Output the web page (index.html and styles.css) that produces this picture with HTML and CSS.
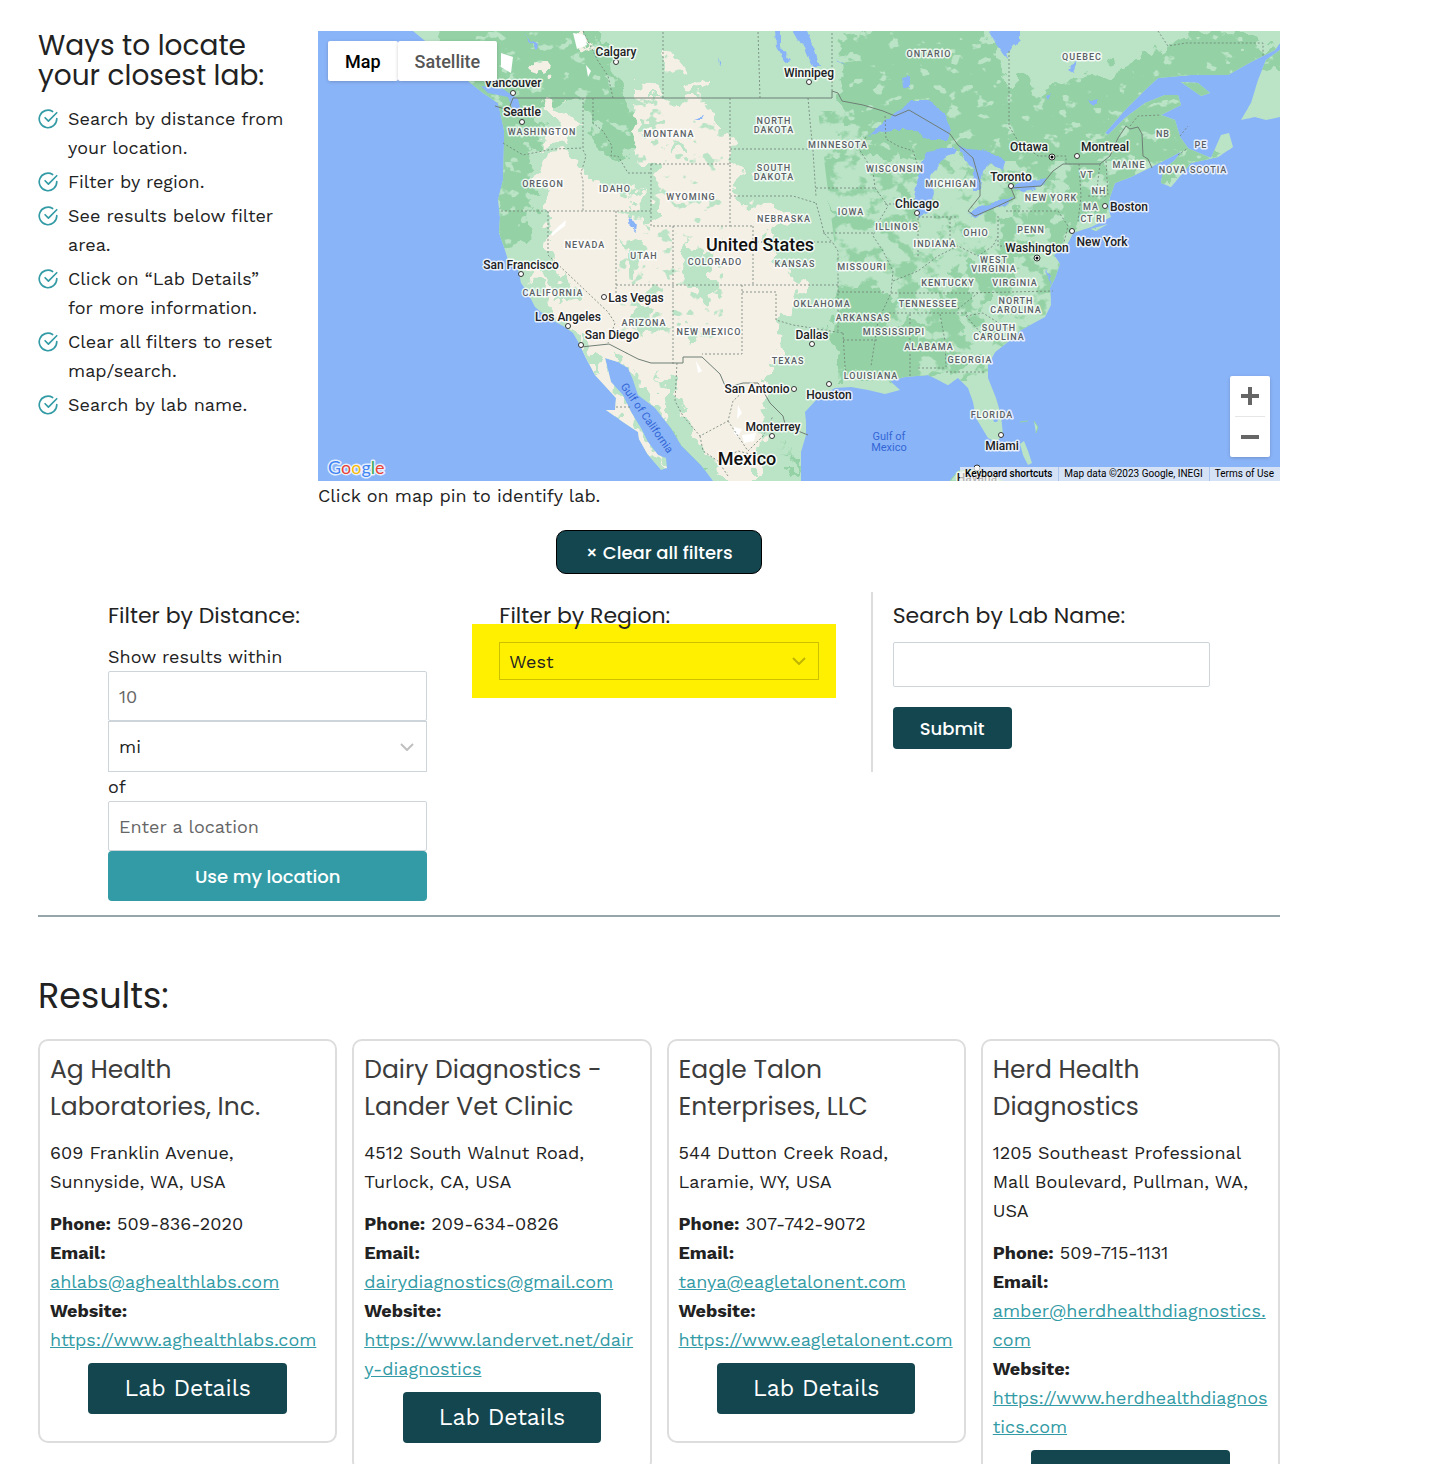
FILE: index.html
```html
<!DOCTYPE html>
<html lang="en">
<head>
    <meta charset="UTF-8">
    <meta name="viewport" content="width=device-width, initial-scale=1.0">
    <title>Find a Lab</title>
    <link rel="stylesheet" href="styles.css">
</head>
<body>
    <svg class="defs" width="0" height="0" aria-hidden="true">
        <symbol id="check" viewBox="0 0 24 24">
            <path d="M22.5 11.5V12a10.5 10.5 0 1 1-5-9"/>
            <path d="M8.5 10.5l4 4L22.5 4.5"/>
        </symbol>
    </svg>

    <main class="page">
        <!-- Intro and map section -->
        <section class="top">
            <div class="intro">
                <h2>Ways to locate your closest lab:</h2>
                <ul class="steps">
                    <li><svg><use href="#check"/></svg><span>Search by distance from your location.</span></li>
                    <li><svg><use href="#check"/></svg><span>Filter by region.</span></li>
                    <li><svg><use href="#check"/></svg><span>See results below filter area.</span></li>
                    <li><svg><use href="#check"/></svg><span>Click on “Lab Details” for more information.</span></li>
                    <li><svg><use href="#check"/></svg><span>Clear all filters to reset map/search.</span></li>
                    <li><svg><use href="#check"/></svg><span>Search by lab name.</span></li>
                </ul>
            </div>

            <div class="map-col">
                <div class="map">
                    <svg class="map-svg" viewBox="0 0 962 450" preserveAspectRatio="xMidYMid slice">
                        <defs>
                            <filter id="rough" x="-5%" y="-5%" width="110%" height="110%">
                                <feTurbulence type="fractalNoise" baseFrequency="0.06" numOctaves="3" seed="4"/>
                                <feDisplacementMap in="SourceGraphic" scale="34" xChannelSelector="R" yChannelSelector="G"/>
                            </filter>
                            <filter id="coast" x="-5%" y="-5%" width="110%" height="110%">
                                <feTurbulence type="fractalNoise" baseFrequency="0.12" numOctaves="2" seed="9"/>
                                <feDisplacementMap in="SourceGraphic" scale="6" xChannelSelector="R" yChannelSelector="G"/>
                            </filter>
                            <filter id="speckle" x="0" y="0" width="100%" height="100%">
                                <feTurbulence type="fractalNoise" baseFrequency="0.06 0.07" numOctaves="3" seed="12"/>
                                <feColorMatrix values="0 0 0 0 0  0 0 0 0 0  0 0 0 0 0  14 0 0 0 -7.6"/>
                                <feComposite in="SourceGraphic" operator="in"/>
                            </filter>
                            <filter id="sparse" x="0" y="0" width="100%" height="100%">
                                <feTurbulence type="fractalNoise" baseFrequency="0.07 0.09" numOctaves="3" seed="21"/>
                                <feColorMatrix values="0 0 0 0 0  0 0 0 0 0  0 0 0 0 0  14 0 0 0 -8.8"/>
                                <feComposite in="SourceGraphic" operator="in"/>
                            </filter>
                            <filter id="dense" x="0" y="0" width="100%" height="100%">
                                <feTurbulence type="fractalNoise" baseFrequency="0.05 0.06" numOctaves="4" seed="7"/>
                                <feColorMatrix values="0 0 0 0 0  0 0 0 0 0  0 0 0 0 0  10 0 0 0 -5"/>
                                <feComposite in="SourceGraphic" operator="in"/>
                            </filter>
                            <clipPath id="land">
                                <path d="M95 0L112 14L135 38L150 50L165 62L180 72L186 99L186 112L185 149L180 169L182 186L181 202L186 216L190 229L200 237L203 252L210 262L217 276L230 287L245 295L255 302L262 314L268 327L277 344L288 356L298 367L297 379L288 379L305 391L320 401L321 408L330 424L343 439L349 437L348 427L340 424L330 411L323 397L313 381L305 364L293 351L287 327L300 331L310 337L315 349L320 364L337 377L353 397L363 414L383 434L395 450L483 450L483 421L488 404L488 391L487 381L500 367L517 357L533 356L550 359L567 363L582 359L572 350L587 346L610 344L620 349L630 354L640 347L650 357L655 371L658 387L670 407L678 411L685 404L683 384L678 367L670 347L670 334L677 321L690 311L703 299L727 286L733 274L732 257L737 247L742 233L736 224L748 216L755 202L773 196L793 186L790 176L792 166L797 152L813 146L833 136L853 126L870 117L862 106L857 89L843 84L863 74L860 64L847 64L827 72L807 87L790 104L787 102L807 79L827 59L840 47L873 44L910 44L933 31L957 19L962 12V0Z"/>
                                <path d="M867 116L893 127L903 104L911 102L915 116L900 126L873 132L853 156L843 152L845 139L857 129Z"/>
                                <path d="M948 29L962 19V86L948 89L937 86L923 89L933 72L940 49Z"/>
                                <path d="M863 51L880 52L892 62L883 65Z"/>
                                <path d="M704 188L711 194L708 200L702 194Z"/>
                                <path d="M773 198l17-5-12 7zM702 413l4-3 4 10 4 12-4 2-5-10z"/>
                            </clipPath>
                        </defs>
                        <rect width="962" height="450" class="sea"/>
                        <g clip-path="url(#land)">
                            <rect width="962" height="450" class="light"/>
                            <!-- forests -->
                            <path class="dark" filter="url(#dense)" d="M500 80H700L760 200L730 290L670 350H520V240L510 160Z"/>
                            <g class="dark" filter="url(#rough)">
                                <path d="M120 -20H265L300 40L310 75L330 110L300 130L275 120L268 75L215 75L225 110L210 130L215 170L210 195L205 215L182 205L170 120L130 60Z"/>
                                <path d="M525 10L570 -20H660L690 50L740 55L800 35L900 -5L970 30L900 60L870 120L840 160L770 200L745 150L700 145L660 130L645 120L600 130L560 125L530 85L520 60Z"/>
                                <path d="M690 185L750 160L790 150L760 200L700 230L670 270L650 280L640 300L600 300L640 240L680 215Z"/>
                                <path d="M520 262L545 250L575 265L560 300L600 290L640 300L665 330L600 350L560 345L525 345L515 300Z"/>
                                <path d="M835 100L900 120L850 160Z"/>
                                <path d="M350 370L370 400L400 440L385 450L345 390Z"/>
                                <path d="M460 410L480 430L478 450L455 425Z"/>
                                <path d="M510 170L530 180L545 195L520 190Z"/>
                            </g>
                            <rect x="500" y="0" width="462" height="130" class="light" filter="url(#sparse)"/>
                            <rect x="600" y="130" width="362" height="230" class="light" filter="url(#speckle)"/>
                            <rect x="150" y="0" width="150" height="270" class="light" filter="url(#sparse)"/>
                            <!-- dry land -->
                            <g class="dry" filter="url(#rough)">
                                <path d="M318 72L388 66L398 95L414 112L412 130L432 142L415 155L422 170L460 175L478 190L450 198L448 215L462 235L482 250L476 275L462 290L460 320L445 345L450 372L445 395L440 420L440 450H412L395 430L368 390L350 360L340 340L352 395L300 325L290 400L262 320L252 298L225 262L212 240L228 235L225 208L240 190L216 180L226 160L214 148L228 125L255 122L262 135L280 150L300 160L310 150L330 165L325 130L312 100Z"/>
                                <path d="M228 70L242 72L256 95L250 112L225 115L234 90Z"/>
                                <path d="M345 24L365 25L362 42L348 45Z"/>
                                <path d="M375 50L392 52L390 60L372 58Z"/>
                                <path d="M316 50L340 58L345 68L316 68Z"/>
                                <path d="M262 2L272 6L275 20L262 15Z"/>
                                <path d="M215 28L232 36L230 50L218 42Z"/>
                                <path d="M290 350L310 375L345 440L300 400Z"/>
                            </g>
                            <!-- mountain vegetation inside the dry area -->
                            <g class="light" filter="url(#rough)">
                                <path d="M205 218L225 222L262 262L258 275L240 265L215 238Z"/>
                                <path d="M278 125L300 130L318 160L305 165L285 155Z"/>
                                <path d="M320 130L336 130L340 190L328 200L318 175Z"/>
                                <path d="M308 205L325 212L322 245L312 250Z"/>
                                <path d="M360 210L385 218L400 255L395 280L378 262L365 240Z"/>
                                <path d="M318 275L345 290L355 300L335 302L310 288Z"/>
                                <path d="M375 290L382 308L376 314L370 300Z"/>
                                <path d="M340 345L356 350L362 385L385 420L410 445L380 445L352 395Z"/>
                                <path d="M262 305L275 315L284 345L270 330Z"/>
                                <path d="M440 370L456 376L456 395L478 440L460 440L450 410Z"/>
                                <path d="M322 88L345 90L342 98L325 96Z"/>
                                <path d="M352 112L375 118L370 124L350 120Z"/>
                            </g>
                            <rect x="300" y="68" width="105" height="240" class="light" filter="url(#sparse)"/>
                            <!-- salt flats and snow -->
                            <path class="snow" d="M233 203l8-8 7-6-1 6-7 5-6 5zM420 374l4 8-5 6zM416 396l8 2-4 8-4-4zM424 404l14-2-2 8-10 2zM378 330l6 10-4 2zM183 22l12 4-2 16-10-6zM255 2l12 2 2 10-10 4zM268 34l5 6-3 6z"/>
                            <!-- lakes and bays -->
                            <g class="sea" filter="url(#coast)">
                                <path d="M668 -5L680 16L688 27L695 16L702 9V-5Z"/>
                                <path d="M550 106L567 89L583 79L593 69L610 69L627 82L633 99L630 109L610 109L597 99L573 99L560 102Z"/>
                                <path d="M607 122L630 116L640 119L623 129L613 146L615 162L610 182L600 186L596 166L600 146Z"/>
                                <path d="M640 114L650 118L670 120L687 129L685 139L672 132L665 139L663 159L655 159L656 139L646 126Z"/>
                                <path d="M650 182L667 174L697 166L690 173L667 181L657 187Z"/>
                                <path d="M693 156L703 151L730 147L723 156L707 161Z"/>
                                <path d="M473 -5L487 -5L497 19L502 36L494 36L487 19Z"/>
                                <path d="M457 -3L462 -3L462 16L473 29L467 31L458 16Z"/>
                                <path d="M310 187L314 188L319 195L318 201L312 196Z"/>
                                <path d="M584 46l8-2v12l-7 2z"/>
                                <path d="M750 38l10-10-5 13zM770 69l10-2-4 8zM728 65l5-2-3 6z"/>
                                <path d="M376 88l10-3-2 3zM400 26l3 8-2-1zM518 30l12 4-8-2z"/>
                                <path d="M726 236l3 8 3 10 1-8z"/>
                                <path d="M206 3l14 12-2 3z"/>
                                <path d="M675 388l4-3 2 4-4 2z"/>
                            </g>
                            <path class="sea" d="M163 55L185 58L200 68L203 80L196 82L190 66L170 62Z"/>
                        </g>
                        <path class="isle" d="M702 391l8-1M716 390l4 6-2 6M632 450l8-10 20-2 25 12z"/>

                        <!-- borders -->
                        <g class="state-line">
                            <path d="M185 112L195 118L205 124L235 118L265 117M265 67V119L268 125L263 142L265 150V180M183 180H333M230 180V224L290 281L297 292L290 312M298 180V264M275 67V92L285 100L294 115L293 125L300 125L310 142H332"/>
                            <path d="M333 133H412V195H333ZM412 67V133M412 118H490M490 67L492 90L495 120L498 165M412 165H475L498 172M498 157H557M498 172L503 190L506 202L515 212M355 195V333M435 195V254M298 254H520M424 254V323H384M424 261H458V289L475 294L500 298L525 302"/>
                            <path d="M412 195H435M435 211H515M515 212L520 220V300M525 309H559M520 261H568M525 302L527 335L530 350M505 202H555M557 157L570 175L560 192L555 205L565 220L575 240L573 262L560 290L553 335M548 106L541 118L555 140L557 157M567 173H598M600 187V225M632 187V215M600 186H640M567 85L568 108L580 115L595 120L600 135"/>
                            <path d="M571 282H650M573 262H650M592 283V345M622 283L627 310L628 336M600 337H628M628 341H668M575 250L600 240L620 225L640 215L660 225L675 215L680 205M650 262L735 260M648 285L665 282L690 298M640 278L660 262M648 285L670 310M680 185V215H735M688 180H740L750 195L745 215M761 133L763 165L760 190M782 133L778 165M770 165H790M765 180H780M788 130L790 165"/>
                            <path d="M442 67L440 0M345 67V0M514 60V0M691 20V95L700 110L720 125H748V133M265 0L280 30L290 45L295 67M812 95L820 85L843 84M840 0L850 15L868 12H945V25M862 105L870 95M860 124L870 117"/>
                            <path d="M359 332L357 370L365 385L382 405L410 390L415 370L428 358M382 405L385 420L400 430L420 420L440 425M410 390L430 420L445 405L455 385M400 430L410 445M298 376H313"/>
                        </g>
                        <path class="country-line" d="M177 75L190 79M195 67H514V60L520 62L524 70L545 74L565 80L577 85L591 79L632 103L640 114L645 118L655 127L662 152L662 165L650 180L657 185L680 175L697 167L693 157L723 155L735 140L745 133H782L792 125L800 107L808 95L812 98L820 96L824 103L825 125L830 128L834 137M263 316L291 313L320 328L333 332H365V326H384L402 343L408 357L425 352H440L448 365L452 372L465 385L467 393L480 400L490 404M195 67L192 75L196 82"/>

                        <g class="dots">
                            <circle cx="298" cy="31" r="2.5"/><circle cx="195" cy="62" r="2.5"/><circle cx="204" cy="91" r="2.5"/>
                            <circle cx="491" cy="51" r="2.5"/><circle cx="203" cy="243" r="2.5"/><circle cx="286" cy="266" r="2.5"/>
                            <circle cx="250" cy="295" r="2.5"/><circle cx="263" cy="314" r="2.5"/><circle cx="494" cy="313" r="2.5"/>
                            <circle cx="476" cy="358" r="2.5"/><circle cx="511" cy="353" r="2.5"/><circle cx="454" cy="405" r="2.5"/>
                            <circle cx="599" cy="182" r="2.5"/><circle cx="693" cy="155" r="2.5"/><circle cx="759" cy="125" r="2.5"/>
                            <circle cx="787" cy="175" r="2.5"/><circle cx="754" cy="200" r="2.5"/><circle cx="683" cy="404" r="2.5"/>
                            <circle cx="734" cy="126" r="3"/><circle cx="719" cy="227" r="3"/><circle cx="659" cy="437" r="3"/>
                        </g>
                        <g class="capital"><circle cx="734" cy="126" r="1.5"/><circle cx="719" cy="227" r="1.5"/></g>

                        <!-- labels -->
                        <g class="state">
                            <text x="224" y="104">WASHINGTON</text>
                            <text x="225" y="156">OREGON</text>
                            <text x="297" y="161">IDAHO</text>
                            <text x="351" y="106">MONTANA</text>
                            <text x="373" y="169">WYOMING</text>
                            <text x="267" y="217">NEVADA</text>
                            <text x="326" y="228">UTAH</text>
                            <text x="397" y="234">COLORADO</text>
                            <text x="235" y="265">CALIFORNIA</text>
                            <text x="326" y="295">ARIZONA</text>
                            <text x="391" y="304">NEW MEXICO</text>
                            <text x="456" y="93">NORTH</text><text x="456" y="102">DAKOTA</text>
                            <text x="456" y="140">SOUTH</text><text x="456" y="149">DAKOTA</text>
                            <text x="520" y="117">MINNESOTA</text>
                            <text x="466" y="191">NEBRASKA</text>
                            <text x="477" y="236">KANSAS</text>
                            <text x="504" y="276">OKLAHOMA</text>
                            <text x="470" y="333">TEXAS</text>
                            <text x="533" y="184">IOWA</text>
                            <text x="544" y="239">MISSOURI</text>
                            <text x="545" y="290">ARKANSAS</text>
                            <text x="553" y="348">LOUISIANA</text>
                            <text x="577" y="141">WISCONSIN</text>
                            <text x="579" y="199">ILLINOIS</text>
                            <text x="633" y="156">MICHIGAN</text>
                            <text x="617" y="216">INDIANA</text>
                            <text x="658" y="205">OHIO</text>
                            <text x="630" y="255">KENTUCKY</text>
                            <text x="610" y="276">TENNESSEE</text>
                            <text x="576" y="304">MISSISSIPPI</text>
                            <text x="611" y="319">ALABAMA</text>
                            <text x="652" y="332">GEORGIA</text>
                            <text x="674" y="387">FLORIDA</text>
                            <text x="676" y="232">WEST</text><text x="676" y="241">VIRGINIA</text>
                            <text x="697" y="255">VIRGINIA</text>
                            <text x="698" y="273">NORTH</text><text x="698" y="282">CAROLINA</text>
                            <text x="681" y="300">SOUTH</text><text x="681" y="309">CAROLINA</text>
                            <text x="713" y="202">PENN</text>
                            <text x="733" y="170">NEW YORK</text>
                            <text x="769" y="147">VT</text>
                            <text x="781" y="163">NH</text>
                            <text x="773" y="179">MA</text>
                            <text x="769" y="191">CT</text><text x="783" y="191">RI</text>
                            <text x="811" y="137">MAINE</text>
                            <text x="845" y="106">NB</text>
                            <text x="883" y="117">PE</text>
                            <text x="875" y="142">NOVA SCOTIA</text>
                            <text x="611" y="26">ONTARIO</text>
                            <text x="764" y="29">QUEBEC</text>
                        </g>
                        <g class="city">
                            <text x="298" y="25">Calgary</text>
                            <text x="195" y="56">Vancouver</text>
                            <text x="204" y="85">Seattle</text>
                            <text x="491" y="46">Winnipeg</text>
                            <text x="203" y="238">San Francisco</text>
                            <text x="318" y="271">Las Vegas</text>
                            <text x="250" y="290">Los Angeles</text>
                            <text x="294" y="308">San Diego</text>
                            <text x="494" y="308">Dallas</text>
                            <text x="439" y="362">San Antonio</text>
                            <text x="511" y="368">Houston</text>
                            <text x="455" y="400">Monterrey</text>
                            <text x="599" y="177">Chicago</text>
                            <text x="711" y="120">Ottawa</text>
                            <text x="787" y="120">Montreal</text>
                            <text x="693" y="150">Toronto</text>
                            <text x="811" y="180">Boston</text>
                            <text x="784" y="215">New York</text>
                            <text x="719" y="221">Washington</text>
                            <text x="684" y="419">Miami</text>
                            <text x="659" y="451">Havana</text>
                        </g>
                        <g class="country">
                            <text x="442" y="220">United States</text>
                            <text x="429" y="434">Mexico</text>
                        </g>
                        <g class="water">
                            <text x="571" y="409">Gulf of</text><text x="571" y="420">Mexico</text>
                            <text transform="translate(326 389) rotate(55)">Gulf of California</text>
                        </g>
                        <text class="google" x="10" y="443"><tspan class="g-blue">G</tspan><tspan class="g-red">o</tspan><tspan class="g-yellow">o</tspan><tspan class="g-blue">g</tspan><tspan class="g-green">l</tspan><tspan class="g-red">e</tspan></text>
                    </svg>

                    <div class="map-type">
                        <button type="button" class="active">Map</button>
                        <button type="button">Satellite</button>
                    </div>
                    <div class="zoom">
                        <button type="button" aria-label="Zoom in"><svg viewBox="0 0 18 18"><path d="M0 7h7V0h4v7h7v4h-7v7H7v-7H0z"/></svg></button>
                        <button type="button" aria-label="Zoom out"><svg viewBox="0 0 18 18"><path d="M0 7h18v4H0z"/></svg></button>
                    </div>
                    <div class="credits">
                        <button type="button">Keyboard shortcuts</button>
                        <span>Map data ©2023 Google, INEGI</span>
                        <a href="#">Terms of Use</a>
                    </div>
                </div>
                <p>Click on map pin to identify lab.</p>
            </div>
        </section>

        <!-- Filter section -->
        <button type="button" class="btn clear">× Clear all filters</button>
        <section class="filters">
            <div class="filter">
                <h3>Filter by Distance:</h3>
                <label for="distance">Show results within</label>
                <input type="text" id="distance" placeholder="10">
                <select id="unit" aria-label="Unit">
                    <option>mi</option>
                    <option>km</option>
                </select>
                <label for="location">of</label>
                <input type="text" id="location" placeholder="Enter a location">
                <button type="button" class="btn locate">Use my location</button>
            </div>
            <div class="filter">
                <h3><label for="region">Filter by Region:</label></h3>
                <div class="highlight">
                    <select id="region">
                        <option>West</option>
                        <option>Midwest</option>
                        <option>South</option>
                        <option>Northeast</option>
                    </select>
                </div>
            </div>
            <form class="filter search">
                <h3><label for="labname">Search by Lab Name:</label></h3>
                <input type="text" id="labname">
                <button type="submit" class="btn submit">Submit</button>
            </form>
        </section>

        <!-- Results section -->
        <h1>Results:</h1>
        <section class="results">
            <article class="card">
                <h2>Ag Health Laboratories, Inc.</h2>
                <p>609 Franklin Avenue, Sunnyside, WA, USA</p>
                <p><b>Phone:</b> 509-836-2020<br>
                <b>Email:</b><br><a href="#">ahlabs@aghealthlabs.com</a><br>
                <b>Website:</b><br><a href="#">https://www.aghealthlabs.com</a></p>
                <button type="button" class="btn details">Lab Details</button>
            </article>
            <article class="card">
                <h2>Dairy Diagnostics - Lander Vet Clinic</h2>
                <p>4512 South Walnut Road, Turlock, CA, USA</p>
                <p><b>Phone:</b> 209-634-0826<br>
                <b>Email:</b><br><a href="#">dairydiagnostics@gmail.com</a><br>
                <b>Website:</b><br><a href="#">https://www.landervet.net/dair<wbr>y-diagnostics</a></p>
                <button type="button" class="btn details">Lab Details</button>
            </article>
            <article class="card">
                <h2>Eagle Talon Enterprises, LLC</h2>
                <p>544 Dutton Creek Road, Laramie, WY, USA</p>
                <p><b>Phone:</b> 307-742-9072<br>
                <b>Email:</b><br><a href="#">tanya@eagletalonent.com</a><br>
                <b>Website:</b><br><a href="#">https://www.eagletalonent.com</a></p>
                <button type="button" class="btn details">Lab Details</button>
            </article>
            <article class="card">
                <h2>Herd Health Diagnostics</h2>
                <p>1205 Southeast Professional Mall Boulevard, Pullman, WA, USA</p>
                <p><b>Phone:</b> 509-715-1131<br>
                <b>Email:</b><br><a href="#">amber@herdhealthdiagnostics.<wbr>com</a><br>
                <b>Website:</b><br><a href="#">https://www.herdhealthdiagnos<wbr>tics.com</a></p>
                <button type="button" class="btn details">Lab Details</button>
            </article>
        </section>
    </main>
</body>
</html>
```
FILE: styles.css
```css
* {
    box-sizing: border-box;
}

body {
    margin: 0;
    font-family: "Work Sans", Inter, sans-serif;
    font-size: 18px;
    line-height: 29px;
    color: #222;
    background-color: #fff;
}

h1, h2, h3, p, ul {
    margin: 0;
    padding: 0;
}

h1, h2, h3 {
    font-family: Poppins, Inter, sans-serif;
    font-weight: 400;
}

button, input, select {
    font: inherit;
    color: inherit;
}

button {
    cursor: pointer;
}

a {
    color: #329ba5;
}

.defs {
    position: absolute;
}

.page {
    padding: 31px 172px 0 38px;
}

/* Intro and map */
.top {
    display: flex;
    gap: 30px;
}

.intro {
    flex: 0 0 250px;
}

.intro h2 {
    font-size: 28px;
    line-height: 30px;
    margin-bottom: 13px;
}

.steps {
    list-style: none;
    display: flex;
    flex-direction: column;
    gap: 5px;
}

.steps li {
    display: flex;
    gap: 10px;
}

.steps svg {
    flex: none;
    width: 20px;
    height: 20px;
    margin-top: 5px;
    fill: none;
    stroke: #329ba5;
    stroke-width: 2;
    stroke-linecap: round;
    stroke-linejoin: round;
}

.map-col {
    flex: 1;
    min-width: 0;
}

.map {
    position: relative;
    height: 450px;
    overflow: hidden;
    font-family: Roboto, sans-serif;
}

.map-svg {
    display: block;
    width: 100%;
    height: 100%;
}

.sea { fill: #8ab4f8; }
.light { fill: #bbe4c7; }
.dark { fill: #94d2a5; }
.dry { fill: #f5f0e5; }
.snow { fill: #fff; }

.isle {
    fill: #bbe4c7;
    stroke: #94d2a5;
}

.state-line, .country-line {
    fill: none;
    stroke: #6f7f76;
}

.state-line {
    stroke-dasharray: 2 2;
    opacity: 0.8;
}

.dots {
    fill: #fff;
    stroke: #333;
}

.capital {
    fill: #000;
}

.map-svg text {
    text-anchor: middle;
    paint-order: stroke;
    stroke: #fff;
    stroke-width: 3px;
    stroke-opacity: 0.8;
    stroke-linejoin: round;
}

.state {
    font-size: 9px;
    font-weight: 500;
    letter-spacing: 1px;
    fill: #5a5f66;
}

.city {
    font-size: 12px;
    font-weight: 500;
    fill: #202124;
}

.country {
    font-size: 18px;
    font-weight: 500;
    fill: #111;
}

.map-svg .water text {
    font-size: 11px;
    fill: #3367d6;
    stroke: none;
}

.map-svg .google {
    font-family: Lato, sans-serif;
    font-size: 18px;
    text-anchor: start;
}

.g-blue { fill: #4285f4; }
.g-red { fill: #ea4335; }
.g-yellow { fill: #fbbc04; }
.g-green { fill: #34a853; }

.map-type {
    position: absolute;
    top: 10px;
    left: 10px;
    display: flex;
}

.map-type button {
    height: 40px;
    padding: 0 17px;
    border: none;
    border-radius: 2px;
    background-color: #fff;
    font-size: 18px;
    font-weight: 500;
    color: #565656;
    box-shadow: 0 1px 4px -1px rgba(0, 0, 0, 0.3);
}

.map-type .active {
    color: #000;
}

.zoom {
    position: absolute;
    right: 10px;
    bottom: 24px;
    width: 40px;
    padding: 0 5px;
    border-radius: 2px;
    background-color: #fff;
    box-shadow: 0 1px 4px -1px rgba(0, 0, 0, 0.3);
}

.zoom button {
    display: flex;
    align-items: center;
    justify-content: center;
    width: 100%;
    height: 40px;
    padding: 0;
    border: none;
    background: none;
}

.zoom button + button {
    height: 41px;
    border-top: 1px solid #e6e6e6;
}

.zoom svg {
    width: 18px;
    height: 18px;
    fill: #666;
}

.credits {
    position: absolute;
    right: 0;
    bottom: 0;
    display: flex;
    height: 14px;
    font-size: 10px;
    line-height: 14px;
    color: #000;
}

.credits > * {
    padding: 0 6px 0 5px;
    border: none;
    background-color: rgba(245, 245, 245, 0.7);
    color: inherit;
    text-decoration: none;
}

.credits button {
    font-weight: 500;
}

.credits > * + * {
    border-left: 1px solid #a9c4ee;
}

/* Filters */
.btn {
    display: block;
    border: none;
    border-radius: 4px;
    background-color: #144650;
    color: #fff;
    font-family: Poppins, Inter, sans-serif;
    font-weight: 500;
}

.clear {
    height: 44px;
    margin: 20px auto 18px;
    padding: 0 28px;
    border: 1px solid #000;
    border-radius: 10px;
}

.filters {
    display: grid;
    grid-template-columns: repeat(3, 1fr);
    gap: 72px;
    align-items: start;
    padding: 0 70px 14px;
    border-bottom: 2px solid #95a5a9;
}

.filter h3 {
    position: relative;
    z-index: 1;
    padding-top: 11px;
    margin-bottom: 13px;
    font-size: 22px;
    line-height: 26px;
}

.filter > label {
    display: block;
}

.filter input, .filter select {
    display: block;
    width: 100%;
    height: 50px;
    padding: 0 10px;
    border: 1px solid #cdd5da;
    border-radius: 2px;
    background-color: #fff;
}

.filter input::placeholder {
    color: #666;
    opacity: 1;
}

.filter select {
    height: 51px;
    border-radius: 0;
    appearance: none;
    background: url("data:image/svg+xml,%3Csvg xmlns='http://www.w3.org/2000/svg' width='14' height='8' fill='none' stroke='%23000' stroke-opacity='.25' stroke-width='2'%3E%3Cpath d='M1 1l6 6 6-6'/%3E%3C/svg%3E") no-repeat right 12px center;
}

.locate {
    width: 100%;
    height: 50px;
    background-color: #329ba5;
}

.highlight {
    margin: -18px -17px 0 -27px;
    padding: 18px 17px 18px 27px;
    background-color: #fff000;
}

.highlight select {
    height: 38px;
    padding: 0 9px;
    border-color: #cdc000;
}

.search {
    margin-left: -20px;
    padding: 0 0 23px 20px;
    border-left: 2px solid #ddd;
}

.filter.search input {
    height: 45px;
    margin-bottom: 20px;
}

.submit {
    height: 42px;
    padding: 0 27px;
}

/* Results */
h1 {
    margin: 57px 0 21px;
    font-size: 35px;
    line-height: 44px;
}

.results {
    display: grid;
    grid-template-columns: repeat(4, 1fr);
    gap: 15px;
    align-items: start;
}

.card {
    padding: 10px 10px 27px;
    border: 2px solid #ddd;
    border-radius: 10px;
}

.card h2 {
    margin-bottom: 13px;
    font-size: 25px;
    line-height: 37px;
    color: #3c3c3c;
}

.card p {
    margin-bottom: 13px;
    overflow-wrap: anywhere;
}

.card p + p {
    margin-bottom: 9px;
}

.details {
    height: 51px;
    margin: 0 auto;
    padding: 0 36px;
    font-family: "Work Sans", Inter, sans-serif;
    font-size: 23px;
    font-weight: 400;
}
```
